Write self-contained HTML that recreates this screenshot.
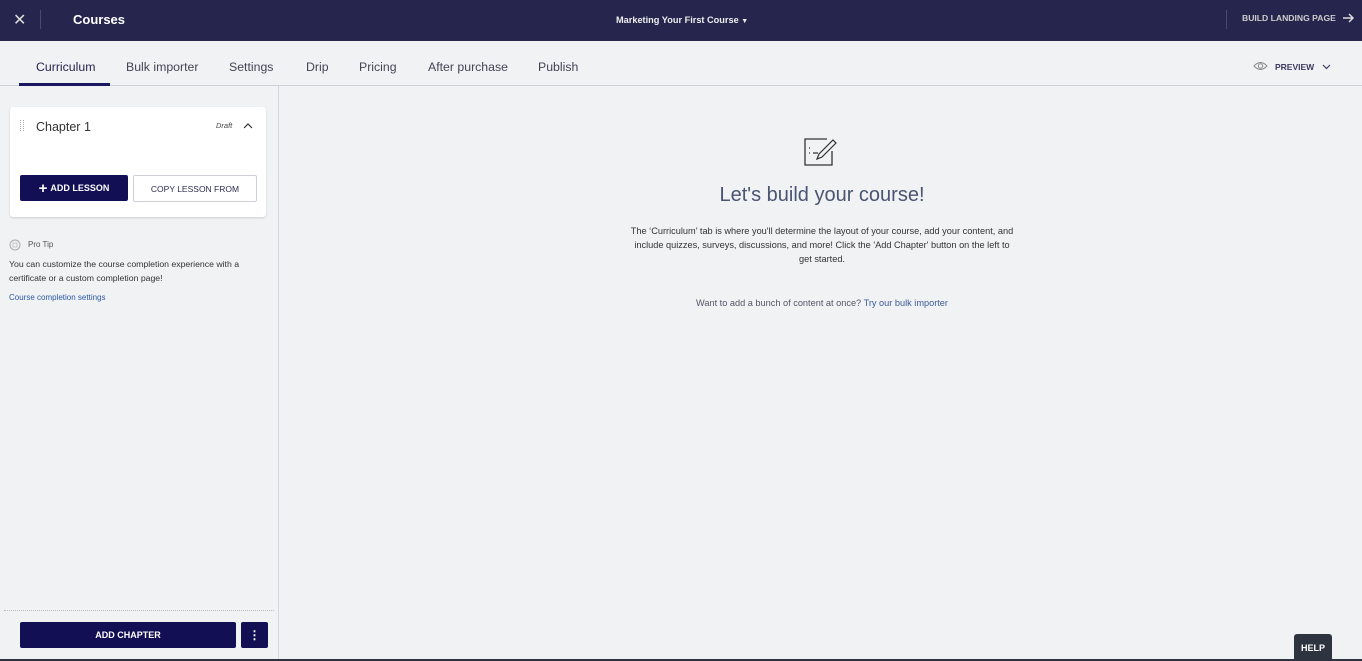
<!DOCTYPE html>
<html><head><meta charset="utf-8"><style>
*{box-sizing:border-box;margin:0;padding:0}
body{width:1362px;height:661px;overflow:hidden;background:#f1f2f4;font-family:"Liberation Sans",sans-serif;position:relative;color:#2d2d44}
.hdr{position:absolute;left:0;top:0;width:1362px;height:41px;background:#26254d;color:#fff}
.abs{position:absolute}
.tabs{position:absolute;top:41px;left:0;width:1362px;height:45px;border-bottom:1px solid #cfd0d8}
.tab{position:absolute;top:19px;font-size:12.3px;color:#444456}
.side{position:absolute;left:0;top:86px;width:279px;height:575px;border-right:1px solid #d6d7de}
.card{position:absolute;left:10px;top:107px;width:256px;height:110px;background:#fff;border-radius:3px;box-shadow:0 1px 2px rgba(0,0,0,.15)}
.btn{position:absolute;background:#130f55;color:#fff;font-weight:bold;font-size:9px;display:flex;align-items:center;justify-content:center;border-radius:2px}
</style></head><body>
<div class="hdr">
 <div class="abs" style="left:13px;top:10px;font-size:16px;color:#ddd">✕</div>
 <div class="abs" style="left:40px;top:10px;width:1px;height:19px;background:#4a4970"></div>
 <div class="abs" style="left:73px;top:12px;font-size:13px;font-weight:bold">Courses</div>
 <div class="abs" style="left:616px;top:15px;font-size:9.2px;font-weight:bold;color:#eee">Marketing Your First Course <span style="font-size:7px">▼</span></div>
 <div class="abs" style="left:1226px;top:10px;width:1px;height:19px;background:#4a4970"></div>
 <div class="abs" style="left:1242px;top:13px;font-size:8.6px;font-weight:bold;color:#ccc">BUILD LANDING PAGE</div>
 <svg class="abs" style="left:1342px;top:12px" width="13" height="12" viewBox="0 0 13 12"><path d="M1 6h10M7 2l4 4-4 4" stroke="#ddd" stroke-width="1.5" fill="none"/></svg>
</div>
<div class="tabs">
 <div class="tab" style="left:36px;color:#26254d">Curriculum</div>
 <div class="abs" style="left:19px;top:42px;width:91px;height:3px;background:#1a1760"></div>
 <div class="tab" style="left:126px">Bulk importer</div>
 <div class="tab" style="left:229px">Settings</div>
 <div class="tab" style="left:306px">Drip</div>
 <div class="tab" style="left:359px">Pricing</div>
 <div class="tab" style="left:428px">After purchase</div>
 <div class="tab" style="left:538px">Publish</div>
 <svg class="abs" style="left:1253px;top:20px" width="15" height="10" viewBox="0 0 15 10"><path d="M1 5Q7.5-2 14 5Q7.5 12 1 5Z" stroke="#888" fill="none"/><circle cx="7.5" cy="5" r="2.2" stroke="#888" fill="none"/></svg>
 <div class="abs" style="left:1275px;top:21px;font-size:8.5px;font-weight:bold;color:#3a3a60">PREVIEW</div>
 <svg class="abs" style="left:1322px;top:23px" width="9" height="6" viewBox="0 0 9 6"><path d="M1 1l3.5 3.5L8 1" stroke="#3a3a60" fill="none" stroke-width="1.2"/></svg>
</div>
<div class="side"></div>
<div class="card">
 <div class="abs" style="left:10px;top:13px;width:4px;height:11px;border-left:1.5px dotted #aaa;border-right:1.5px dotted #aaa"></div>
 <div class="abs" style="left:26px;top:13px;font-size:12.5px;color:#333">Chapter 1</div>
 <div class="abs" style="left:206px;top:14px;font-size:7.5px;font-style:italic;color:#444">Draft</div>
 <svg class="abs" style="left:233px;top:15px" width="10" height="7" viewBox="0 0 10 7"><path d="M1 6l4-4 4 4" stroke="#333" fill="none" stroke-width="1.2"/></svg>
</div>
<div class="btn" style="left:20px;top:175px;width:108px;height:26px;font-size:9px"><span style="font-size:15px;margin-right:3px">+</span>ADD LESSON</div>
<div class="abs" style="left:133px;top:175px;width:124px;height:27px;border:1px solid #cfd0d8;background:#fff;font-size:8.5px;color:#2d2d55;display:flex;align-items:center;justify-content:center;border-radius:2px">COPY LESSON FROM</div>
<svg class="abs" style="left:9px;top:239px" width="12" height="12" viewBox="0 0 12 12"><circle cx="6" cy="6" r="5" stroke="#aaa" fill="none"/><path d="M4 4h4v4H4z" stroke="#bbb" fill="none" stroke-width=".8"/></svg>
<div class="abs" style="left:28px;top:240px;font-size:8px;color:#555">Pro Tip</div>
<div class="abs" style="left:9px;top:257px;font-size:8.7px;line-height:14px;color:#333;width:265px">You can customize the course completion experience with a certificate or a custom completion page!</div>
<div class="abs" style="left:9px;top:293px;font-size:8px;color:#2b57a6">Course completion settings</div>
<div class="abs" style="left:4px;top:610px;width:270px;border-top:1px dotted #bbb"></div>
<div class="btn" style="left:20px;top:622px;width:216px;height:26px">ADD CHAPTER</div>
<div class="btn" style="left:241px;top:622px;width:27px;height:26px;font-size:12px">⋮</div>
<svg class="abs" style="left:804px;top:137px" width="36" height="30" viewBox="0 0 36 30"><path d="M28 14v14H1V2h22" stroke="#333" fill="none" stroke-width="1.3"/><path d="M13 22l2-5L29 3l3 3-14 14z" stroke="#333" fill="none" stroke-width="1.2"/><path d="M5 11h1M5 16h1M9 16h5" stroke="#333" stroke-width="1.3"/></svg>
<div class="abs" style="left:600px;top:184px;width:444px;text-align:center;font-size:20px;color:#4a5572">Let's build your course!</div>
<div class="abs" style="left:630px;top:224px;width:384px;text-align:center;font-size:9.2px;line-height:14px;color:#333">The ‘Curriculum’ tab is where you'll determine the layout of your course, add your content, and include quizzes, surveys, discussions, and more! Click the 'Add Chapter' button on the left to get started.</div>
<div class="abs" style="left:600px;top:298px;width:444px;text-align:center;font-size:9.2px;color:#556">Want to add a bunch of content at once? <span style="color:#3b5a9a">Try our bulk importer</span></div>
<div class="abs" style="left:1294px;top:634px;width:38px;height:27px;background:#2d3440;border-radius:3px 3px 0 0;color:#fff;font-size:9px;font-weight:bold;display:flex;align-items:center;justify-content:center">HELP</div>
<div class="abs" style="left:0;top:659px;width:1362px;height:2px;background:#2d3440"></div>
</body></html>
